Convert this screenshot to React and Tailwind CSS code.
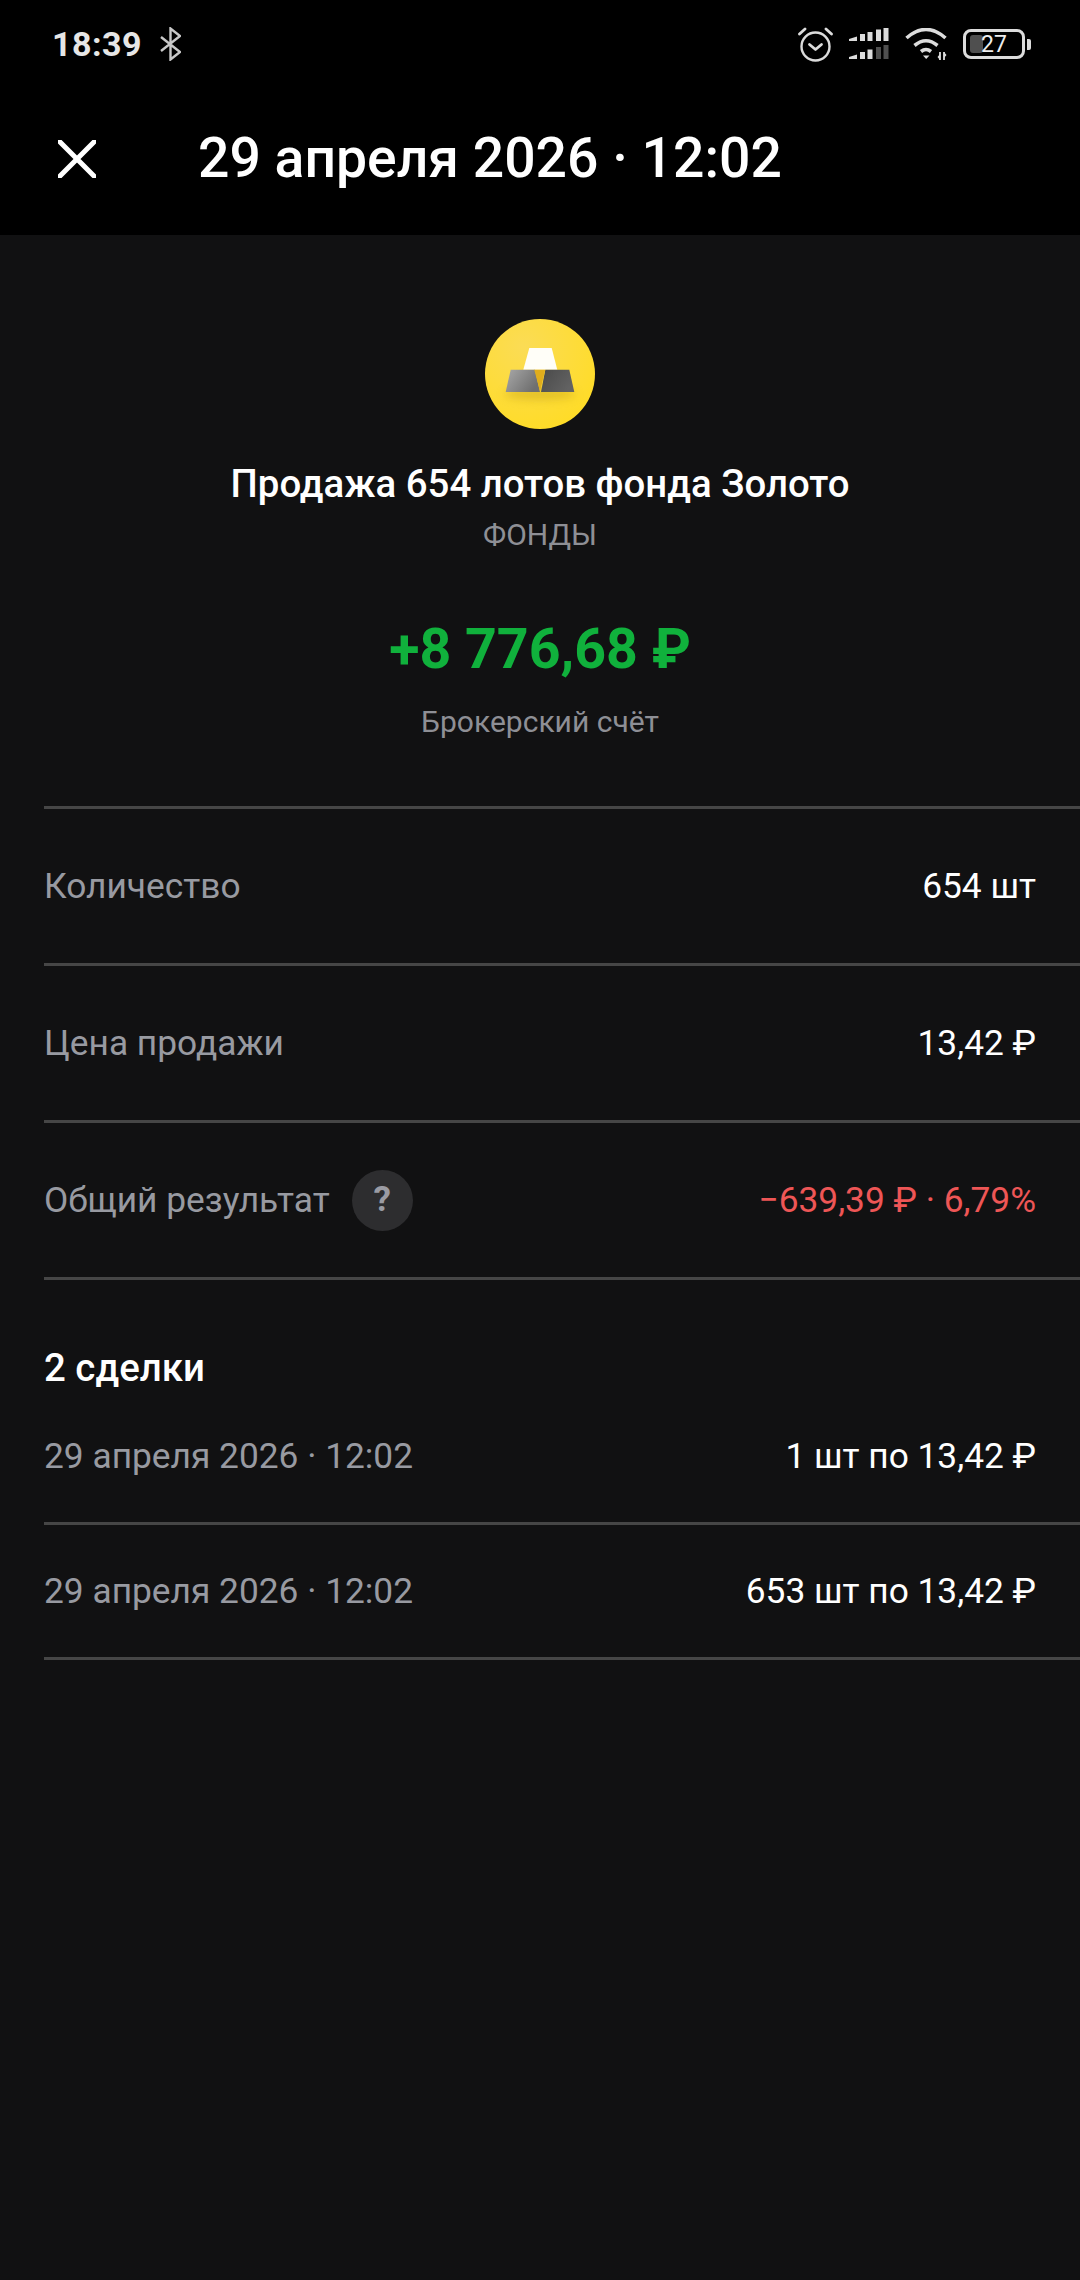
const font = { fontFamily: "Roboto, sans-serif" };

function Row({ label, value, help, valueClass = "text-white" }) {
  return (
    <div className="h-[157px] flex items-center justify-between pr-11 border-b-[3px] border-[#464646]">
      <div className="flex items-center gap-[22px]">
        <span className="text-[35.300px] leading-[40px] text-[#989aa1]">{label}</span>
        {help && (
          <span className="w-[61px] h-[61px] rounded-full bg-[#2d2d2f] flex items-center justify-center text-[35px] font-bold text-[#9a9ba3]">?</span>
        )}
      </div>
      <span className={"text-[35.300px] leading-[40px] " + valueClass}>{value}</span>
    </div>
  );
}

function Deal({ date, value }) {
  return (
    <div className="h-[135px] flex items-center justify-between pr-11 border-b-[3px] border-[#464646]">
      <span className="text-[35.300px] leading-[40px] text-[#989aa1]">{date}</span>
      <span className="text-[35.300px] leading-[40px] text-white">{value}</span>
    </div>
  );
}

function Alarm() {
  return (
    <svg width="35" height="35" viewBox="0 0 35 35" fill="none" stroke="#dcdcdc" strokeWidth="2.4" strokeLinecap="round" strokeLinejoin="round">
      <circle cx="17.500" cy="19.500" r="14" />
      <path d="M11.500 17.500 17.500 22.500l6-5" strokeWidth="2.800" />
      <path d="M1.500 7 7 2M33.500 7 28 2" strokeWidth="2.800" />
    </svg>
  );
}

function Signal() {
  return (
    <svg width="40" height="32" viewBox="0 0 40 32" fill="#dcdcdc">
      <path d="M0 11 8 8.500V13H0zM11 6h5v7h-5zM18.500 4h5v9h-5zM27 1.500h5V13h-5zM34.500 0h5v13h-5z" />
      <path d="M0 29 8 26.500v4.500H0zM11 24h5v7h-5zM18.500 21.500h5V31h-5z" />
      <path d="M27 19h5v12h-5zM34.500 17h5v14h-5z" fill="#4f4f4f" />
    </svg>
  );
}

function Wifi() {
  return (
    <svg width="42" height="33" viewBox="0 0 42 33" fill="none" stroke="#dcdcdc" strokeWidth="3.600">
      <path d="M1.500 10Q21-7 40.500 10" />
      <path d="M9.500 17.500Q21 8 32.500 17.500" />
      <path d="M16 23.500Q21 19.500 26 23.500" />
      <path d="M18 27.500H24.500L21.200 31z" fill="#dcdcdc" stroke="none" />
      <path d="M35 24v8M39 24v8" strokeWidth="1.800" />
      <path d="M32.500 29l2.500-3v6zM41.500 27l-2.500 3v-6z" fill="#dcdcdc" stroke="none" />
    </svg>
  );
}

function Gold() {
  return (
    <svg width="110" height="110" viewBox="0 0 110 110">
      <defs>
        <radialGradient id="g" cx="35%" cy="25%" r="85%">
          <stop offset="0" stopColor="#fbdc55" />
          <stop offset="1" stopColor="#ffdc24" />
        </radialGradient>
        <linearGradient id="l" x1="0" y1="0" x2="1" y2="0.5">
          <stop offset="0" stopColor="#a8a8a8" />
          <stop offset="1" stopColor="#6f6f6f" />
        </linearGradient>
        <linearGradient id="r" x1="0" y1="0" x2="1" y2="0.5">
          <stop offset="0" stopColor="#4a4a4a" />
          <stop offset="1" stopColor="#626262" />
        </linearGradient>
        <filter id="b" x="-30%" y="-100%" width="160%" height="300%">
          <feGaussianBlur stdDeviation="4" />
        </filter>
      </defs>
      <circle cx="55" cy="55" r="55" fill="url(#g)" />
      <ellipse cx="55" cy="75" rx="36" ry="6" fill="#c9a516" opacity="0.5" filter="url(#b)" />
      <path d="M44.300 29h22.400l5.600 21.700H38.300z" fill="#fffef8" />
      <path d="M25.700 50.700H50L55 73H20.700z" fill="url(#l)" />
      <path d="M60.300 50.700h24l5 22.300H56z" fill="url(#r)" />
      <path d="M49.300 50.700h11L55 72.500z" fill="#e0ad1c" />
    </svg>
  );
}

export default function App() {
  return (
    <div style={font} className="w-[1080px] h-[2280px] bg-[#111112] flex flex-col overflow-hidden">
      <div className="bg-black h-[235px] flex flex-col shrink-0">
        <div className="h-[88px] flex items-center justify-between pl-[52px] pr-[49px]">
          <div className="flex items-center gap-[18px]">
            <span className="text-[34px] font-bold text-[#e6e6e6] tracking-[0.5px]">18:39</span>
            <svg width="21" height="34" viewBox="0 0 21 34" fill="none" stroke="#c8c8c8" strokeWidth="2.400">
              <path d="M1 10 20 25 10.500 32.500V1.500L20 9 1 24" />
            </svg>
          </div>
          <div className="flex items-center gap-[16px]">
            <Alarm />
            <Signal />
            <Wifi />
            <div className="flex items-center gap-[2px]">
              <div className="relative w-[62px] h-[30px] rounded-[8px] border-[3.500px] border-[#dcdcdc] flex items-center justify-center">
                <div className="absolute left-[4px] top-[3px] bottom-[3px] w-[13px] rounded-[3px] bg-[#4f4f4f]" />
                <span className="relative text-[23px] leading-none text-[#eeeeee]">27</span>
              </div>
              <div className="w-[4px] h-[11px] bg-[#dcdcdc] rounded-r-[2px]" />
            </div>
          </div>
        </div>
        <div className="flex-1 flex items-center pl-[58px] pb-[6px]">
          <svg width="38" height="38" viewBox="0 0 38 38" stroke="#fff" strokeWidth="5" fill="none">
            <path d="M0 0 38 38M38 0 0 38" />
          </svg>
          <span className="ml-[102px] text-[55.300px] leading-[64px] font-medium text-white">29 апреля 2026 · 12:02</span>
        </div>
      </div>

      <div className="flex flex-col items-center pt-[84px]">
        <Gold />
        <div className="mt-[33px] text-[38.400px] leading-[44px] font-medium text-white">Продажа 654 лотов фонда Золото</div>
        <div className="mt-[11px] text-[30px] leading-[36px] text-[#8e8f95]">ФОНДЫ</div>
        <div className="mt-[65px] text-[55.500px] leading-[64px] font-bold text-[#10b13c]">+8 776,68 ₽</div>
        <div className="mt-[22px] text-[30px] leading-[36px] text-[#8e8f95]">Брокерский счёт</div>
      </div>

      <div className="ml-[44px] mt-[66px] border-t-[3px] border-[#464646]">
        <Row label="Количество" value="654 шт" />
        <Row label="Цена продажи" value="13,42 ₽" />
        <Row label="Общий результат" value="−639,39 ₽ · 6,79%" help valueClass="text-[#ee5656]" />
      </div>

      <div className="ml-[44px] mt-[66px]">
        <div className="text-[38.400px] leading-[44px] font-medium text-white">2 сделки</div>
        <Deal date="29 апреля 2026 · 12:02" value="1 шт по 13,42 ₽" />
        <Deal date="29 апреля 2026 · 12:02" value="653 шт по 13,42 ₽" />
      </div>
    </div>
  );
}
